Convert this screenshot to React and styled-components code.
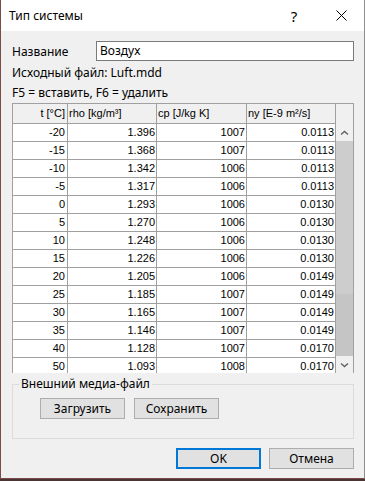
import React from "react";
import styled, { createGlobalStyle } from "styled-components";

const rows = [
  [-20, "1.396", 1007, "0.0113"],
  [-15, "1.368", 1007, "0.0113"],
  [-10, "1.342", 1006, "0.0113"],
  [-5, "1.317", 1006, "0.0113"],
  [0, "1.293", 1006, "0.0130"],
  [5, "1.270", 1006, "0.0130"],
  [10, "1.248", 1006, "0.0130"],
  [15, "1.226", 1006, "0.0130"],
  [20, "1.205", 1006, "0.0149"],
  [25, "1.185", 1007, "0.0149"],
  [30, "1.165", 1007, "0.0149"],
  [35, "1.146", 1007, "0.0149"],
  [40, "1.128", 1007, "0.0170"],
  [50, "1.093", 1008, "0.0170"],
];

const headers = [
  { text: "t [°C]", right: true },
  { text: "rho [kg/m³]" },
  { text: "cp [J/kg K]" },
  { text: "ny [E-9 m²/s]" },
];

const GlobalStyle = createGlobalStyle`
  body {
    margin: 0;
    background: #4a3434;
  }
`;

const Desktop = styled.div`
  width: 365px;
  height: 481px;
  overflow: hidden;
`;

const Window = styled.div`
  box-sizing: border-box;
  width: 365px;
  height: 479px;
  background: #f0f0f0;
  border-left: 1px solid #7d4a4a;
  border-right: 1px solid #8e8e8e;
  border-bottom: 1px solid #7d4a4a;
  display: flex;
  flex-direction: column;
  font-family: "Noto Sans", "Liberation Sans", sans-serif;
  font-size: 12px;
  color: #000;
`;

const TitleBar = styled.div`
  height: 31px;
  flex: none;
  background: #fff;
  display: flex;
  align-items: center;
  padding-left: 8px;
`;

const Title = styled.span`
  flex: 1;
  font-size: 12px;
`;

const HelpGlyph = styled.span`
  width: 46px;
  text-align: center;
  font-size: 15px;
  margin-right: 1px;
`;

const CloseBox = styled.span`
  width: 46px;
  display: flex;
  justify-content: center;
  align-items: center;
`;

const Content = styled.div`
  flex: 1;
  display: flex;
  flex-direction: column;
  padding: 10px 10px 0 11px;
`;

const NameRow = styled.div`
  display: grid;
  grid-template-columns: 84px 1fr;
  align-items: center;
  height: 20px;
`;

const NameInput = styled.div`
  box-sizing: border-box;
  height: 20px;
  border: 1px solid #7a7a7a;
  background: #fff;
  padding-left: 3px;
  line-height: 18px;
`;

const InfoLine = styled.div`
  height: 20px;
  line-height: 20px;
  margin-top: ${(p) => (p.$first ? "2px" : "0")};
`;

const Frame = styled.div`
  box-sizing: border-box;
  width: 342px;
  height: 270px;
  border: 1px solid #a0a0a0;
  border-bottom: none;
  overflow: hidden;
  font-family: "Liberation Sans", Arial, sans-serif;
  font-size: 11px;
  flex: none;
`;

const HeaderRow = styled.div`
  display: grid;
  grid-template-columns: 55px 89px 90px 89px 17px;
  height: 20px;
  background: #f0f0f0;
`;

const HeadCell = styled.div`
  box-sizing: border-box;
  border-right: ${(p) => (p.$corner ? "none" : "1px solid #a0a0a0")};
  border-bottom: ${(p) => (p.$corner ? "none" : "1px solid #a0a0a0")};
  padding: 0 2px 0 1px;
  line-height: 19px;
  text-align: ${(p) => (p.$right ? "right" : "left")};
  white-space: nowrap;
`;

const Body = styled.div`
  display: flex;
  height: 249px;
`;

const Rows = styled.div`
  display: flex;
  flex-direction: column;
  flex: none;
`;

const DataRow = styled.div`
  display: grid;
  grid-template-columns: 55px 89px 90px 89px;
  height: 18px;
  flex: none;
  background: #fff;
`;

const Cell = styled.div`
  box-sizing: border-box;
  border-right: 1px solid #a0a0a0;
  border-bottom: 1px solid #a0a0a0;
  padding-right: ${(p) => (p.$first ? "2px" : "1px")};
  text-align: right;
  line-height: 17px;
`;

const ScrollBar = styled.div`
  width: 17px;
  display: flex;
  flex-direction: column;
  background: #f0f0f0;
`;

const ScrollArrow = styled.div`
  height: 17px;
  flex: none;
  display: flex;
  align-items: center;
  justify-content: center;
`;

const Thumb = styled.div`
  flex: ${(p) => (p.$grow ? 1 : "none")};
  height: ${(p) => (p.$grow ? "auto" : "62px")};
  background: ${(p) => (p.$grow ? "#cdcdcd" : "#c5c5c5")};
`;

const GroupBox = styled.fieldset`
  margin: 3px 0 0 0;
  width: 342px;
  box-sizing: border-box;
  border: 1px solid #dcdcdc;
  padding: 6px 0 19px 6px;
`;

const Legend = styled.legend`
  padding: 0 2px;
  line-height: 16px;
`;

const GroupButtons = styled.div`
  display: flex;
  gap: 9px;
  padding-left: 21px;
`;

const Button = styled.button`
  box-sizing: border-box;
  width: 85px;
  height: 21px;
  padding: 0;
  background: #e1e1e1;
  border: ${(p) => (p.$default ? "2px solid #0078d7" : "1px solid #adadad")};
  font-family: "Noto Sans", "Liberation Sans", sans-serif;
  font-size: 12px;
  color: #000;
`;

const Footer = styled.div`
  display: flex;
  justify-content: flex-end;
  gap: 8px;
  width: 342px;
  margin-top: 9px;
`;

const Chevron = ({ down }) => (
  <svg width="9" height="6" viewBox="0 0 9 6">
    <path
      d={down ? "M1 1.5 L4.5 4.5 L8 1.5" : "M1 4.5 L4.5 1.5 L8 4.5"}
      fill="none"
      stroke="#606060"
      strokeWidth="1.4"
    />
  </svg>
);

export default function App() {
  return (
    <Desktop>
      <GlobalStyle />
      <Window>
        <TitleBar>
          <Title>Тип системы</Title>
          <HelpGlyph>?</HelpGlyph>
          <CloseBox>
            <svg width="11" height="11" viewBox="0 0 11 11">
              <path d="M0.5 0.5 L10.5 10.5 M10.5 0.5 L0.5 10.5" stroke="#000" strokeWidth="1" />
            </svg>
          </CloseBox>
        </TitleBar>
        <Content>
          <NameRow>
            <span>Название</span>
            <NameInput>Воздух</NameInput>
          </NameRow>
          <InfoLine $first>Исходный файл: Luft.mdd</InfoLine>
          <InfoLine>F5 = вставить, F6 = удалить</InfoLine>
          <Frame>
            <HeaderRow>
              {headers.map((h) => (
                <HeadCell key={h.text} $right={h.right}>
                  {h.text}
                </HeadCell>
              ))}
              <HeadCell $corner />
            </HeaderRow>
            <Body>
              <Rows>
                {rows.map((r) => (
                  <DataRow key={r[0]}>
                    <Cell $first>{r[0]}</Cell>
                    <Cell>{r[1]}</Cell>
                    <Cell>{r[2]}</Cell>
                    <Cell>{r[3]}</Cell>
                  </DataRow>
                ))}
              </Rows>
              <ScrollBar>
                <ScrollArrow>
                  <Chevron />
                </ScrollArrow>
                <Thumb $grow />
                <Thumb />
                <ScrollArrow>
                  <Chevron down />
                </ScrollArrow>
              </ScrollBar>
            </Body>
          </Frame>
          <GroupBox>
            <Legend>Внешний медиа-файл</Legend>
            <GroupButtons>
              <Button>Загрузить</Button>
              <Button>Сохранить</Button>
            </GroupButtons>
          </GroupBox>
          <Footer>
            <Button $default>OK</Button>
            <Button>Отмена</Button>
          </Footer>
        </Content>
      </Window>
    </Desktop>
  );
}
